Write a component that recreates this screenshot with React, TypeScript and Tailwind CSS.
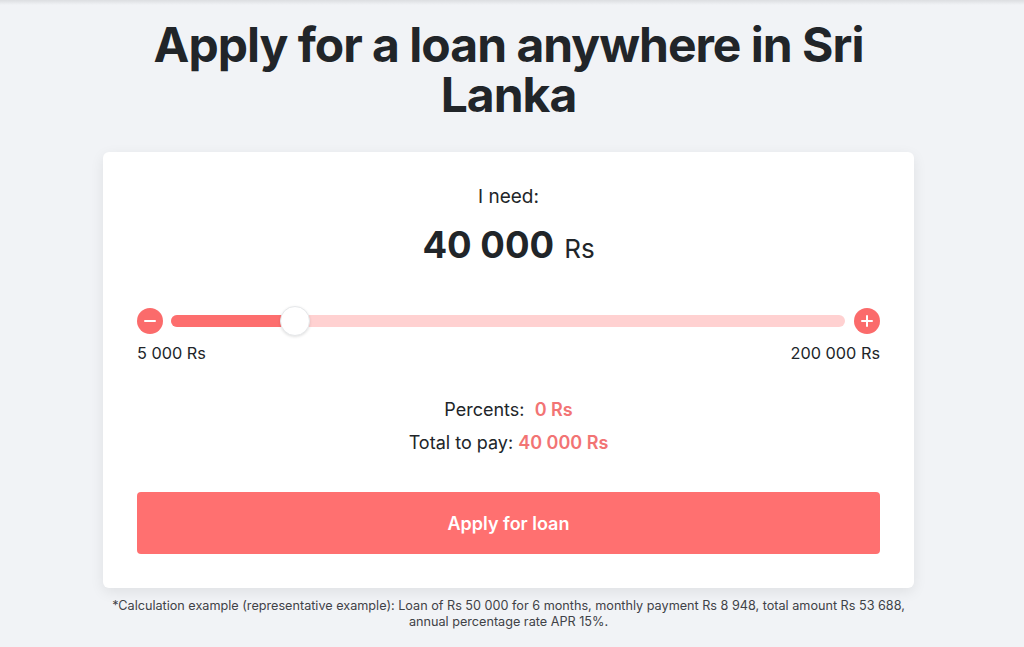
import React from "react";

export default function App() {
  return (
    <div
      className="min-h-[647px] w-[1024px] bg-[#f1f3f6] text-[#212529]"
      style={{ fontFamily: "Inter, 'Noto Sans', sans-serif" }}
    >
      <div className="h-[5px] w-full bg-gradient-to-b from-[#dcdee1] to-[#f1f3f6]" />
      <div className="ml-[103px] w-[811px] flex flex-col items-center">
        <h1 className="mt-[15px] text-center text-[48px] leading-[50px] font-bold tracking-[-1px] px-[40px]">
          Apply for a loan anywhere in Sri Lanka
        </h1>
        <div className="mt-[32px] w-full rounded-[6px] bg-white shadow-[0_4px_14px_rgba(0,0,0,0.08)] px-[34px] pt-[31px] pb-[34px] flex flex-col items-center">
          <div className="text-[19px] leading-[28px]">I need:</div>
          <div className="mt-[14px] leading-[40px] flex items-baseline gap-[10px]">
            <span className="text-[36.5px] font-bold">40 000</span>
            <span className="text-[26px]">Rs</span>
          </div>
          <div className="mt-[37px] w-full flex items-center h-[30px]">
            <div className="w-[26px] h-[26px] rounded-full bg-[#fb6b6b] flex items-center justify-center shrink-0">
              <div className="w-[12px] h-[2px] rounded bg-white" />
            </div>
            <div className="ml-[8px] flex-1 relative h-[12px] rounded-full bg-[#ffd1d1]">
              <div className="absolute left-0 top-0 h-[12px] w-[124px] rounded-full bg-[#fd6e6e]" />
              <div className="absolute left-[109px] top-[-9px] w-[30px] h-[30px] rounded-full bg-white border border-[#e6e8ea] shadow-[0_1px_3px_rgba(0,0,0,0.12)]" />
            </div>
            <div className="ml-[9px] w-[26px] h-[26px] rounded-full bg-[#fb6b6b] flex items-center justify-center shrink-0 relative">
              <div className="absolute w-[12px] h-[2px] rounded bg-white" />
              <div className="absolute w-[2px] h-[12px] rounded bg-white" />
            </div>
          </div>
          <div className="mt-[5px] w-full flex justify-between text-[16.3px] leading-[24px]">
            <span>5 000 Rs</span>
            <span>200 000 Rs</span>
          </div>
          <div className="mt-[28px] text-[18px] leading-[33px]">
            Percents:&nbsp;&nbsp;<span className="font-semibold text-[#f27474]">0 Rs</span>
          </div>
          <div className="text-[18px] leading-[33px]">
            Total to pay: <span className="font-semibold text-[#f27474]">40 000 Rs</span>
          </div>
          <button className="mt-[33px] w-full h-[62px] rounded-[4px] bg-[#ff7070] text-white text-[18px] font-semibold">
            Apply for loan
          </button>
        </div>
        <p className="mt-[10px] w-[810px] text-center text-[12.65px] leading-[16px] text-[#3f4247]">
          *Calculation example (representative example): Loan of Rs 50 000 for 6 months, monthly payment Rs 8 948, total amount Rs 53 688, annual percentage rate APR 15%.
        </p>
      </div>
    </div>
  );
}
